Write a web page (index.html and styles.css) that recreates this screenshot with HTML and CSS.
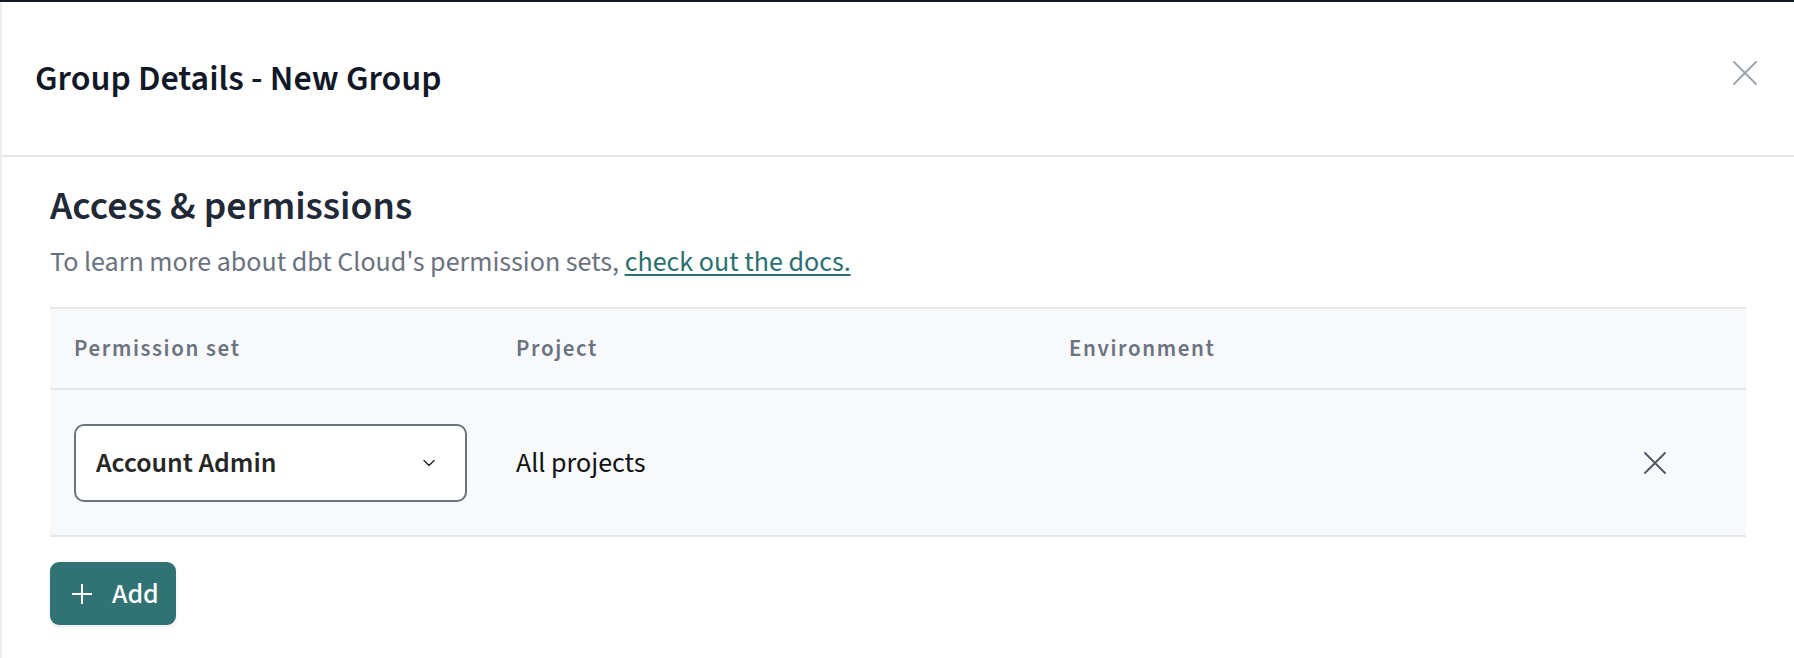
FILE: index.html
```html
<!DOCTYPE html>
<html lang="en">
<head>
<meta charset="utf-8">
<title>Group Details - New Group</title>
<link rel="stylesheet" href="styles.css">
</head>
<body>
<div class="modal">
  <header class="modal-header">
    <h1 class="modal-title">Group Details - New Group</h1>
    <button class="close-btn" aria-label="Close">
      <svg width="24" height="24" viewBox="0 0 24 24" fill="none" stroke="currentColor" stroke-width="1.8" stroke-linecap="round"><path d="M1 1L23 23M23 1L1 23"/></svg>
    </button>
  </header>
  <section class="modal-body">
    <h2 class="section-title">Access &amp; permissions</h2>
    <p class="section-desc">To learn more about dbt Cloud's permission sets, <a href="#" class="doc-link">check out the docs.</a></p>
    <div class="perm-table">
      <div class="perm-row perm-head">
        <div class="cell">Permission set</div>
        <div class="cell">Project</div>
        <div class="cell">Environment</div>
        <div class="cell"></div>
      </div>
      <div class="perm-row perm-item">
        <div class="cell">
          <div class="select">
            <span class="select-value">Account Admin</span>
            <svg class="chevron" width="12" height="8" viewBox="0 0 12 8" fill="none" stroke="currentColor" stroke-width="1.4" stroke-linecap="round" stroke-linejoin="round"><path d="M1 1.5L6 6.5L11 1.5"/></svg>
          </div>
        </div>
        <div class="cell cell-text">All projects</div>
        <div class="cell"></div>
        <div class="cell cell-remove">
          <svg width="22" height="22" viewBox="0 0 22 22" fill="none" stroke="currentColor" stroke-width="1.8" stroke-linecap="round"><path d="M1 1L21 21M21 1L1 21"/></svg>
        </div>
      </div>
    </div>
    <button class="add-btn">
      <svg width="20" height="20" viewBox="0 0 20 20" fill="none" stroke="currentColor" stroke-width="2"><path d="M10 0V20M0 10H20"/></svg>
      <span>Add</span>
    </button>
  </section>
</div>
</body>
</html>
```
FILE: styles.css
```css
* { box-sizing: border-box; }
html, body { margin: 0; padding: 0; }
body {
  background: #ffffff;
  font-family: "Source Sans Pro", "Source Sans 3", Lato, "Liberation Sans", sans-serif;
  border-top: 2px solid #151a28;
  height: 658px;
  overflow: hidden;
}
.modal {
  border-left: 2px solid #eceef1;
  height: 656px;
}
.modal-header {
  height: 155px;
  border-bottom: 2px solid #e5e7eb;
  display: flex;
  align-items: center;
  justify-content: space-between;
  padding: 0 37px 0 33px;
}
.modal-title {
  margin: 0;
  font-size: 36px;
  font-weight: 600;
  color: #111827;
}
.close-btn {
  background: none;
  border: 0;
  padding: 0;
  color: #9ca3af;
  display: flex;
  margin-bottom: 12px;
}
.modal-body {
  padding: 26px 48px 0 48px;
}
.section-title {
  margin: 0;
  font-size: 40px;
  font-weight: 600;
  color: #1f2937;
  line-height: 48px;
}
.section-desc {
  margin: 13px 0 0;
  font-size: 28px;
  line-height: 36px;
  color: #6b7280;
}
.doc-link {
  color: #2b6f71;
  text-decoration: underline;
  text-underline-offset: 3px;
}
.perm-table {
  margin-top: 27px;
  border-top: 2px solid #e5e7eb;
  background: #f8f9fb;
}
.perm-row {
  display: grid;
  grid-template-columns: 442px 553px 1fr 140px;
  align-items: center;
  border-bottom: 2px solid #e5e7eb;
}
.cell { padding-left: 24px; }
.perm-head { height: 81px; }
.perm-head .cell {
  font-size: 23px;
  font-weight: 600;
  letter-spacing: 1.6px;
  color: #6b7280;
}
.perm-item { height: 147px; }
.select {
  width: 393px;
  height: 78px;
  background: #ffffff;
  border: 2px solid #6b7280;
  border-radius: 10px;
  display: flex;
  align-items: center;
  justify-content: space-between;
  padding: 0 30px 0 20px;
}
.select-value {
  font-size: 28px;
  font-weight: 600;
  color: #262626;
}
.chevron { color: #262626; }
.cell-text {
  font-size: 28px;
  color: #111111;
}
.cell-remove {
  color: #4b5563;
  display: flex;
  padding-left: 38px;
}
.add-btn {
  margin-top: 25px;
  height: 63px;
  width: 126px;
  border: 0;
  border-radius: 9px;
  background: #317275;
  color: #ffffff;
  display: flex;
  align-items: center;
  gap: 20px;
  padding: 0 0 0 22px;
  font-family: inherit;
  font-size: 28px;
  font-weight: 500;
  box-shadow: 0 2px 4px rgba(0,0,0,0.08);
}
```
